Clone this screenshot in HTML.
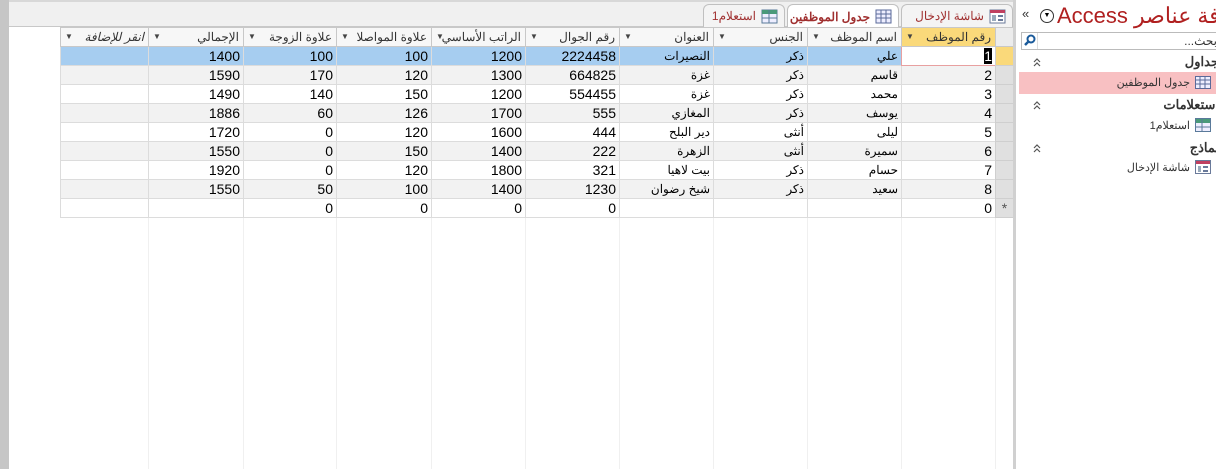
<!DOCTYPE html>
<html><head><meta charset="utf-8"><style>
body{margin:0;width:1216px;height:469px;overflow:hidden;background:#fff;font-family:"Liberation Sans","Noto Sans CJK SC",sans-serif;position:relative}
.abs{position:absolute}
#lstrip{left:0;top:0;width:9px;height:469px;background:#c6c6c6}
#tabbar{left:9px;top:0;width:1004px;height:27px;background:#f0f0f0;border-top:2px solid #d8d8d8;box-sizing:border-box;border-bottom:1px solid #c8c8c8}
.tab{top:4px;height:23px;border:1px solid #c0c0c0;border-bottom:none;border-radius:6px 6px 0 0;background:#f4f4f4;font-size:12px;color:#a03030;direction:rtl;display:flex;align-items:center;padding-right:6px;box-sizing:border-box;gap:5px}
.tab.act{background:#fff;font-weight:bold;height:24px}
table{border-collapse:collapse;table-layout:fixed;direction:rtl;position:absolute;left:60px;top:27px}
td{height:18px;border:1px solid #dcdcdc;padding:0 3px;font-size:14px;text-align:right;white-space:nowrap;overflow:hidden;box-sizing:border-box;line-height:18px}
td:nth-child(3),td:nth-child(4),td:nth-child(5){font-size:12px}
th{height:19px;border:1px solid #c8c8c8;font-weight:normal;font-size:12px;color:#333;background:#f7f7f7;padding:0 4px;text-align:right;position:relative;white-space:nowrap;overflow:hidden;box-sizing:border-box}
th .dd{position:absolute;left:4px;top:4px;font-size:8px;color:#444}
tr.alt td{background:#f2f2f2}
tr.sel td{background:#a6cdf0}
td.rs{background:#e0e0e0!important;border-color:#cfcfcf;text-align:center;color:#555}
#nav{left:1013px;top:0;width:203px;height:469px;background:#fff;border-left:3px solid #d0d0d0;direction:rtl;overflow:hidden}
.sec{font-size:13px;font-weight:bold;color:#333;position:absolute;right:0}
.chev{position:absolute;left:16px}
.item{position:absolute;font-size:11px;color:#333}
.vl{position:absolute;top:217px;height:252px;width:1px;background:#f0f0f0}
</style></head><body>
<div id="lstrip" class="abs"></div>
<div id="tabbar" class="abs"></div>
<div class="tab abs" style="left:901px;width:112px">
<svg width="17" height="15"><rect x="1" y="1" width="15" height="13" fill="#fff" stroke="#6a7a9a"/><rect x="1" y="1" width="15" height="3" fill="#c04060"/><rect x="9" y="6" width="5" height="2" fill="#6a7a9a"/><rect x="9" y="10" width="5" height="2" fill="#6a7a9a"/><rect x="3" y="6" width="4" height="6" fill="#9ab"/></svg>شاشة الإدخال</div>
<div class="tab act abs" style="left:787px;width:112px">
<svg width="17" height="15"><rect x="1" y="1" width="15" height="13" fill="#eef" stroke="#5a6a9a"/><path d="M1 5H16M1 9H16M6 1V14M11 1V14" stroke="#5a6a9a"/></svg>جدول الموظفين</div>
<div class="tab abs" style="left:703px;width:82px">
<svg width="17" height="15"><rect x="1" y="1" width="15" height="13" fill="#eef" stroke="#5a7a9a"/><rect x="1" y="1" width="15" height="4" fill="#4a9a7a"/><path d="M1 9H16M8 1V14" stroke="#5a7a9a"/></svg>استعلام1</div>

<div class="vl" style="left:148px"></div><div class="vl" style="left:243px"></div><div class="vl" style="left:336px"></div><div class="vl" style="left:431px"></div><div class="vl" style="left:525px"></div><div class="vl" style="left:619px"></div><div class="vl" style="left:713px"></div><div class="vl" style="left:807px"></div><div class="vl" style="left:901px"></div><div class="vl" style="left:995px"></div>

<table>
<colgroup><col style="width:18px"><col style="width:94px"><col style="width:94px"><col style="width:94px"><col style="width:94px"><col style="width:94px"><col style="width:94px"><col style="width:95px"><col style="width:93px"><col style="width:95px"><col style="width:88px"></colgroup>
<tr><th style="background:#ececec"></th><th style="background:#fad97a">رقم الموظف<span class="dd">▼</span></th><th>اسم الموظف<span class="dd">▼</span></th><th>الجنس<span class="dd">▼</span></th><th>العنوان<span class="dd">▼</span></th><th>رقم الجوال<span class="dd">▼</span></th><th>الراتب الأساسي<span class="dd">▼</span></th><th>علاوة المواصلا<span class="dd">▼</span></th><th>علاوة الزوجة<span class="dd">▼</span></th><th>الإجمالي<span class="dd">▼</span></th><th style="font-style:italic">انقر للإضافة<span class="dd">▼</span></th></tr>
<tr class="sel"><td class="rs" style="background:#fad97a!important"></td><td style="background:#fff;border:1px solid #e8a0a0"><span style="background:#000;color:#fff">1</span></td><td>علي</td><td>ذكر</td><td>النصيرات</td><td>2224458</td><td>1200</td><td>100</td><td>100</td><td>1400</td><td></td></tr>
<tr class="alt"><td class="rs"></td><td>2</td><td>قاسم</td><td>ذكر</td><td>غزة</td><td>664825</td><td>1300</td><td>120</td><td>170</td><td>1590</td><td></td></tr>
<tr><td class="rs"></td><td>3</td><td>محمد</td><td>ذكر</td><td>غزة</td><td>554455</td><td>1200</td><td>150</td><td>140</td><td>1490</td><td></td></tr>
<tr class="alt"><td class="rs"></td><td>4</td><td>يوسف</td><td>ذكر</td><td>المغازي</td><td>555</td><td>1700</td><td>126</td><td>60</td><td>1886</td><td></td></tr>
<tr><td class="rs"></td><td>5</td><td>ليلى</td><td>أنثى</td><td>دير البلح</td><td>444</td><td>1600</td><td>120</td><td>0</td><td>1720</td><td></td></tr>
<tr class="alt"><td class="rs"></td><td>6</td><td>سميرة</td><td>أنثى</td><td>الزهرة</td><td>222</td><td>1400</td><td>150</td><td>0</td><td>1550</td><td></td></tr>
<tr><td class="rs"></td><td>7</td><td>حسام</td><td>ذكر</td><td>بيت لاهيا</td><td>321</td><td>1800</td><td>120</td><td>0</td><td>1920</td><td></td></tr>
<tr class="alt"><td class="rs"></td><td>8</td><td>سعيد</td><td>ذكر</td><td>شيخ رضوان</td><td>1230</td><td>1400</td><td>100</td><td>50</td><td>1550</td><td></td></tr>
<tr><td class="rs">*</td><td>0</td><td></td><td></td><td></td><td>0</td><td>0</td><td>0</td><td>0</td><td></td><td></td></tr>
</table>

<div id="nav" class="abs">
<div class="abs" style="left:41px;top:3px;font-size:22px;color:#b02020;white-space:nowrap;direction:rtl">كافة عناصر Access</div>
<div class="abs" style="left:24px;top:9px;width:12px;height:12px;border:1px solid #333;border-radius:50%;font-size:7px;text-align:center;line-height:12px;direction:ltr">▼</div>
<div class="abs" style="left:6px;top:6px;font-size:13px;color:#333">»</div>
<div class="abs" style="left:5px;top:32px;width:198px;height:18px;border:1px solid #bbb;box-sizing:border-box"></div>
<svg class="abs" style="left:6px;top:33px" width="16" height="16"><circle cx="9" cy="6" r="3.5" fill="none" stroke="#1a5a9a" stroke-width="2"/><path d="M6.5 8.5L3 12" stroke="#1a5a9a" stroke-width="2.5"/><path d="M16 0V16" stroke="#bbb"/></svg>
<div class="abs" style="right:2px;top:34px;font-size:12px;color:#333">بحث...</div>
<div class="sec" style="top:54px">جداول</div><svg class="chev" style="top:57px" width="10" height="10"><path d="M2 5L5 2L8 5M2 9L5 6L8 9" fill="none" stroke="#555" stroke-width="1.2"/></svg>
<div class="abs" style="left:3px;top:72px;width:200px;height:22px;background:#f8c0c2"></div>
<div class="item" style="right:8px;top:76px;display:flex;gap:5px;align-items:center"><svg width="16" height="13"><rect x=".5" y=".5" width="15" height="12" fill="#eef" stroke="#5a6a9a"/><path d="M0 4H16M0 8H16M5 0V13M10 0V13" stroke="#5a6a9a"/></svg>جدول الموظفين</div>
<div class="sec" style="top:97px">استعلامات</div><svg class="chev" style="top:100px" width="10" height="10"><path d="M2 5L5 2L8 5M2 9L5 6L8 9" fill="none" stroke="#555" stroke-width="1.2"/></svg>
<div class="item" style="right:8px;top:118px;display:flex;gap:5px;align-items:center"><svg width="16" height="14"><rect x=".5" y=".5" width="15" height="13" fill="#eef" stroke="#5a7a9a"/><rect x="1" y="1" width="14" height="4" fill="#4a9a7a"/><path d="M0 9H16M7 0V14" stroke="#5a7a9a"/></svg>استعلام1</div>
<div class="sec" style="top:140px">نماذج</div><svg class="chev" style="top:143px" width="10" height="10"><path d="M2 5L5 2L8 5M2 9L5 6L8 9" fill="none" stroke="#555" stroke-width="1.2"/></svg>
<div class="item" style="right:8px;top:160px;display:flex;gap:5px;align-items:center"><svg width="16" height="14"><rect x=".5" y=".5" width="15" height="13" fill="#fff" stroke="#6a7a9a"/><rect x="1" y="1" width="14" height="3" fill="#c04060"/><rect x="8" y="6" width="5" height="2" fill="#6a7a9a"/><rect x="8" y="10" width="5" height="2" fill="#6a7a9a"/><rect x="3" y="6" width="3" height="6" fill="#9ab"/></svg>شاشة الإدخال</div>
</div>
</body></html>
